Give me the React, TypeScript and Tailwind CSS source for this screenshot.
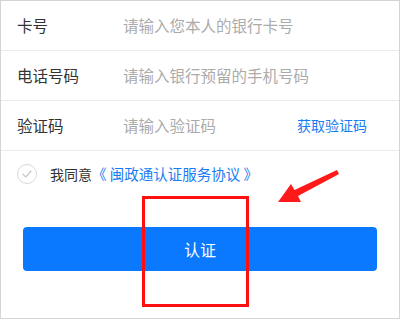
const font = { fontFamily: '"Noto Sans CJK SC", "Noto Sans", sans-serif' }

function Row({ label, placeholder, action }: { label: string; placeholder: string; action?: string }) {
  return (
    <div className="flex h-[50px] items-center border-b border-[#ebebeb] pl-[16px] pr-[32px]">
      <span className="w-[106px] text-[15.5px] text-[#333]">{label}</span>
      <span className="text-[15.5px] text-[#ababab]">{placeholder}</span>
      {action && <span className="ml-auto text-[14px] text-[#1a7cf2]">{action}</span>}
    </div>
  )
}

export default function App() {
  return (
    <div
      className="relative box-border h-[319px] w-[400px] overflow-hidden border border-[#d4d4d4] bg-white"
      style={font}
    >
      <Row label="卡号" placeholder="请输入您本人的银行卡号" />
      <Row label="电话号码" placeholder="请输入银行预留的手机号码" />
      <Row label="验证码" placeholder="请输入验证码" action="获取验证码" />

      <div className="flex h-[46px] items-center pl-[16px]">
        <span className="flex h-[20px] w-[20px] items-center justify-center rounded-full border border-[#d8d8d8]">
          <svg width="12" height="12" viewBox="0 0 12 12" fill="none">
            <path d="M2 6.3 L4.8 9 L10 3.2" stroke="#cacaca" strokeWidth="1.3" strokeLinecap="round" strokeLinejoin="round" />
          </svg>
        </span>
        <span className="ml-[13px] text-[14px] text-[#333]">我同意</span>
        <span className="whitespace-pre text-[14.5px] text-[#1a7cf2]">《 闽政通认证服务协议 》</span>
      </div>

      <div className="mx-[22px] mt-[30px] flex h-[44px] items-center justify-center rounded-[4px] bg-[#0a78ff]">
        <span className="text-[16px] text-white">认证</span>
      </div>

      {/* annotation overlays */}
      <div className="absolute left-[141px] top-[195px] h-[111px] w-[107px] border-[3px] border-[#ff1010]" />
      <svg className="absolute left-[269px] top-[159px]" width="80" height="50" viewBox="0 0 80 50">
        <polygon points="8,42 21,24 24.5,30 67,10 69,14 28,36 31,42" fill="#ff1a1a" />
      </svg>
    </div>
  )
}
